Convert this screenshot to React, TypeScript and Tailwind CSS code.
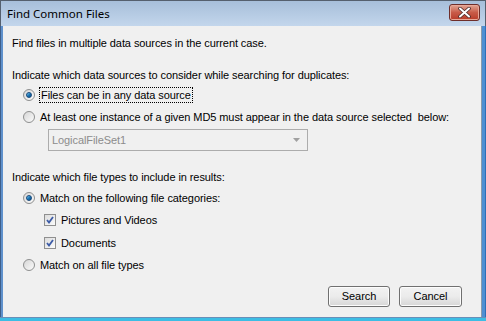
import React from "react";

const Radio = ({ checked }: { checked?: boolean }) => (
  <span className="w-[12px] h-[12px] rounded-full border border-[#8e8f8f] bg-gradient-to-br from-[#d6d6d6] to-[#fbfbfb] flex items-center justify-center shrink-0">
    {checked && (
      <span className="w-[6px] h-[6px] rounded-full bg-gradient-to-br from-[#7fd0f5] via-[#1a78b8] to-[#0e4f86] border border-[#17477a]" />
    )}
  </span>
);

const Check = () => (
  <span className="w-[12px] h-[12px] border border-[#8f8f8f] bg-gradient-to-br from-[#dcdcdc] to-[#fbfbfb] flex items-center justify-center shrink-0">
    <svg width="8" height="8" viewBox="0 0 8 8">
      <path d="M1 4 L3 6.5 L7 1" fill="none" stroke="#3c5ba6" strokeWidth="1.8" />
    </svg>
  </span>
);

const Button = ({ label, width }: { label: string; width: string }) => (
  <button
    type="button"
    className={`${width} h-[21px] rounded-[3px] border border-[#707070] bg-gradient-to-b from-[#f2f2f2] via-[#ebebeb] to-[#d6d6d6] text-[11px] text-black shadow-[inset_0_0_0_1px_#fcfcfc]`}
  >
    {label}
  </button>
);

export default function App() {
  return (
    <div
      className="w-[486px] h-[321px] flex flex-col bg-[#4d86c6] text-[11px] tracking-[-0.08px] text-black"
      style={{ fontFamily: '"Liberation Sans", Arial, sans-serif' }}
    >
      {/* title bar */}
      <div className="h-[26px] flex items-center justify-between border-t border-l border-r border-[#55606e] bg-gradient-to-b from-[#a7bfda] to-[#c3d6ec] pl-[6px] pr-[5px]">
        <span
          className="text-[11.5px] tracking-normal text-black pt-[1px]"
          style={{ fontFamily: '"Noto Sans", "Open Sans", sans-serif' }}
        >
          Find Common Files
        </span>
        <span className="w-[31px] h-[17px] mb-[3px] rounded-[3px] border border-[#6e2e2a] bg-gradient-to-b from-[#e0a594] via-[#c85b48] to-[#b83b28] flex items-center justify-center shadow-[inset_0_0_0_1px_#e8a898]">
          <svg width="13" height="11" viewBox="0 0 13 11">
            <path
              d="M2 1.5 L11 9.5 M11 1.5 L2 9.5"
              stroke="#4a2a2a"
              strokeWidth="3.6"
              strokeLinecap="round"
            />
            <path
              d="M2 1.5 L11 9.5 M11 1.5 L2 9.5"
              stroke="#ffffff"
              strokeWidth="2"
              strokeLinecap="round"
            />
          </svg>
        </span>
      </div>

      <div className="flex-1 flex">
        <div className="w-[3px] border-l border-[#3f5f8a] bg-[#5f91cc]" />
        {/* client area */}
        <div className="flex-1 flex flex-col bg-[#f0f0f0] pl-[9px] pr-[19px]">
          <div className="h-[16px] mt-[9px] flex items-center">
            Find files in multiple data sources in the current case.
          </div>
          <div className="h-[16px] mt-[16px] flex items-center">
            Indicate which data sources to consider while searching for duplicates:
          </div>
          <div className="h-[16px] mt-[4px] flex items-center pl-[11px] gap-[4px]">
            <Radio checked />
            <span className="border border-dotted border-black px-[1px] leading-[14px]">
              Files can be in any data source
            </span>
          </div>
          <div className="h-[16px] mt-[6px] flex items-center pl-[11px] gap-[5px]">
            <Radio />
            <span className="whitespace-pre">
              At least one instance of a given MD5 must appear in the data source selected  below:
            </span>
          </div>
          <div className="mt-[4px] ml-[36px] w-[260px] h-[22px] border border-[#acacac] bg-[#f0f0f0] flex items-center justify-between pl-[3px] pr-[7px] text-[#8c8c8c]">
            <span>LogicalFileSet1</span>
            <svg width="7" height="4" viewBox="0 0 7 4">
              <path d="M0 0 L7 0 L3.5 4 Z" fill="#a0a0a0" />
            </svg>
          </div>
          <div className="h-[16px] mt-[18px] flex items-center">
            Indicate which file types to include in results:
          </div>
          <div className="h-[16px] mt-[5px] flex items-center pl-[11px] gap-[5px]">
            <Radio checked />
            <span>Match on the following file categories:</span>
          </div>
          <div className="h-[16px] mt-[6px] flex items-center pl-[32px] gap-[5px]">
            <Check />
            <span>Pictures and Videos</span>
          </div>
          <div className="h-[16px] mt-[7px] flex items-center pl-[32px] gap-[5px]">
            <Check />
            <span>Documents</span>
          </div>
          <div className="h-[16px] mt-[6px] flex items-center pl-[11px] gap-[5px]">
            <Radio />
            <span>Match on all file types</span>
          </div>
          <div className="mt-[13px] flex justify-end gap-[9px]">
            <Button label="Search" width="w-[62px]" />
            <Button label="Cancel" width="w-[63px]" />
          </div>
        </div>
        <div className="w-[5px] border-l border-[#8a9aac] bg-[#4f8fd2] border-r border-r-[#2d6fb8]" />
      </div>
      <div className="h-[4px] border-t border-[#6a8fb8] bg-[#3dbde4]" />
    </div>
  );
}
